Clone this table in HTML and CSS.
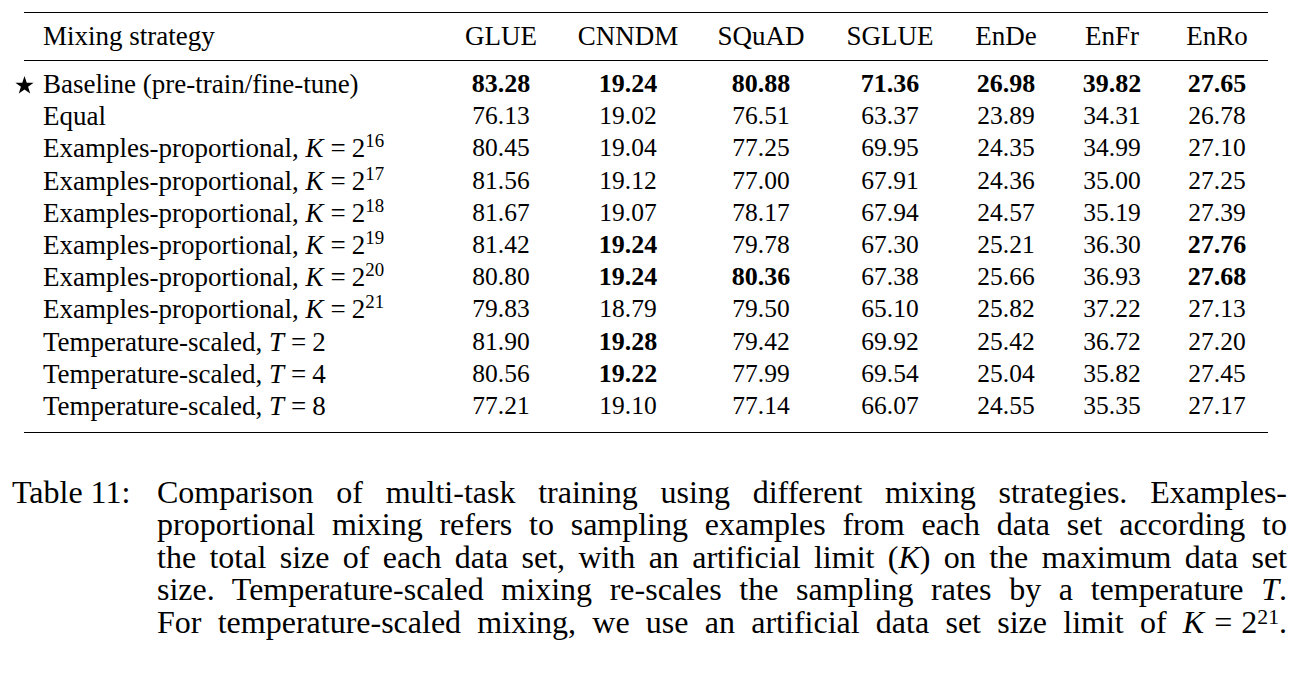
FILE: index.html
```html
<!DOCTYPE html>
<html lang="en">
<head>
<meta charset="utf-8">
<title>Table 11: Mixing strategies</title>
<link rel="stylesheet" href="styles.css">
</head>
<body>
<div class="page">
  <table class="results">
    <colgroup>
      <col class="c-label"><col class="c-glue"><col class="c-cnndm"><col class="c-squad"><col class="c-sglue"><col class="c-ende"><col class="c-enfr"><col class="c-enro">
    </colgroup>
    <thead>
      <tr>
        <th class="label">Mixing strategy</th>
        <th>GLUE</th><th>CNNDM</th><th>SQuAD</th><th>SGLUE</th><th>EnDe</th><th>EnFr</th><th>EnRo</th>
      </tr>
    </thead>
    <tbody>
      <tr class="first">
        <td class="label"><svg class="star" viewBox="0 0 20 19" aria-hidden="true"><polygon points="10,0 12.35,7.0 19.6,7.0 13.8,11.4 16,18.6 10,14.2 4,18.6 6.2,11.4 0.4,7.0 7.65,7.0"/></svg>Baseline (pre-train/fine-tune)</td>
        <td class="best">83.28</td><td class="best">19.24</td><td class="best">80.88</td><td class="best">71.36</td><td class="best">26.98</td><td class="best">39.82</td><td class="best">27.65</td>
      </tr>
      <tr>
        <td class="label">Equal</td>
        <td>76.13</td><td>19.02</td><td>76.51</td><td>63.37</td><td>23.89</td><td>34.31</td><td>26.78</td>
      </tr>
      <tr>
        <td class="label">Examples-proportional, <i>K</i><span class="eq">=</span>2<span class="sup">16</span></td>
        <td>80.45</td><td>19.04</td><td>77.25</td><td>69.95</td><td>24.35</td><td>34.99</td><td>27.10</td>
      </tr>
      <tr>
        <td class="label">Examples-proportional, <i>K</i><span class="eq">=</span>2<span class="sup">17</span></td>
        <td>81.56</td><td>19.12</td><td>77.00</td><td>67.91</td><td>24.36</td><td>35.00</td><td>27.25</td>
      </tr>
      <tr>
        <td class="label">Examples-proportional, <i>K</i><span class="eq">=</span>2<span class="sup">18</span></td>
        <td>81.67</td><td>19.07</td><td>78.17</td><td>67.94</td><td>24.57</td><td>35.19</td><td>27.39</td>
      </tr>
      <tr>
        <td class="label">Examples-proportional, <i>K</i><span class="eq">=</span>2<span class="sup">19</span></td>
        <td>81.42</td><td class="best">19.24</td><td>79.78</td><td>67.30</td><td>25.21</td><td>36.30</td><td class="best">27.76</td>
      </tr>
      <tr>
        <td class="label">Examples-proportional, <i>K</i><span class="eq">=</span>2<span class="sup">20</span></td>
        <td>80.80</td><td class="best">19.24</td><td class="best">80.36</td><td>67.38</td><td>25.66</td><td>36.93</td><td class="best">27.68</td>
      </tr>
      <tr>
        <td class="label">Examples-proportional, <i>K</i><span class="eq">=</span>2<span class="sup">21</span></td>
        <td>79.83</td><td>18.79</td><td>79.50</td><td>65.10</td><td>25.82</td><td>37.22</td><td>27.13</td>
      </tr>
      <tr>
        <td class="label">Temperature-scaled, <i>T</i><span class="eq">=</span>2</td>
        <td>81.90</td><td class="best">19.28</td><td>79.42</td><td>69.92</td><td>25.42</td><td>36.72</td><td>27.20</td>
      </tr>
      <tr>
        <td class="label">Temperature-scaled, <i>T</i><span class="eq">=</span>4</td>
        <td>80.56</td><td class="best">19.22</td><td>77.99</td><td>69.54</td><td>25.04</td><td>35.82</td><td>27.45</td>
      </tr>
      <tr class="last">
        <td class="label">Temperature-scaled, <i>T</i><span class="eq">=</span>8</td>
        <td>77.21</td><td>19.10</td><td>77.14</td><td>66.07</td><td>24.55</td><td>35.35</td><td>27.17</td>
      </tr>
    </tbody>
  </table>

  <div class="caption">
    <div class="cap-label">Table 11:</div>
    <div class="cap-body">
      <span class="cap-line">Comparison of multi-task training using different mixing strategies. Examples-</span>
      <span class="cap-line">proportional mixing refers to sampling examples from each data set according to</span>
      <span class="cap-line">the total size of each data set, with an artificial limit (<i>K</i>) on the maximum data set</span>
      <span class="cap-line">size. Temperature-scaled mixing re-scales the sampling rates by a temperature <i>T</i>.</span>
      <span class="cap-line">For temperature-scaled mixing, we use an artificial data set size limit of <i>K</i><span class="eq">=</span>2<span class="sup">21</span>.</span>
    </div>
  </div>
</div>
</body>
</html>
```

FILE: styles.css
```css
html, body {
  margin: 0;
  padding: 0;
  background: #ffffff;
}

body {
  font-family: "Liberation Serif", "DejaVu Serif", serif;
  color: #000000;
}

.page {
  width: 1305px;
  height: 680px;
  overflow: hidden;
}

/* ---------- table ---------- */
.results {
  margin: 12px 0 0 24px;
  width: 1244px;
  table-layout: fixed;
  border-collapse: separate;
  border-spacing: 0;
  border-top: 1.8px solid #000;
  font-size: 27px;
}

.c-label { width: 418px; }
.c-glue  { width: 118px; }
.c-cnndm { width: 136px; }
.c-squad { width: 130px; }
.c-sglue { width: 128px; }
.c-ende  { width: 104px; }
.c-enfr  { width: 108px; }
.c-enro  { width: 102px; }

.results th,
.results td {
  padding: 0;
  line-height: 32.2px;
  text-align: center;
  vertical-align: middle;
  white-space: nowrap;
  font-weight: normal;
}

.results td {
  font-size: 25.5px;
}

.results th {
  padding-top: 6.7px;
  padding-bottom: 8px;
  border-bottom: 1.3px solid #000;
}

.results .label {
  text-align: left;
  padding-left: 19px;
  font-size: 27px;
}

.results tr.first td {
  padding-top: 7.1px;
}

.results tr.last td {
  padding-bottom: 9.7px;
  border-bottom: 1.8px solid #000;
}

.results td.best {
  font-weight: bold;
  font-size: 26px;
}

.eq {
  margin: 0 6px 0 7px;
}

.star {
  width: 19px;
  height: 18px;
  margin-left: -28px;
  margin-right: 9px;
  vertical-align: -1px;
  fill: #000;
}

.sup {
  font-size: 0.7em;
  line-height: 0;
  vertical-align: 0.55em;
}

/* ---------- caption ---------- */
.caption {
  display: flex;
  margin: 43px 0 0 12px;
  font-size: 32px;
  line-height: 32.5px;
}

.cap-label {
  flex: 0 0 145px;
  white-space: nowrap;
}

.cap-body {
  width: 1130px;
}

.cap-line {
  display: block;
  text-align: justify;
  text-align-last: justify;
}

.cap-body .eq {
  margin: 0 9px 0 10px;
}

.cap-body .sup {
  font-size: 0.68em;
  vertical-align: 0.42em;
}
```
